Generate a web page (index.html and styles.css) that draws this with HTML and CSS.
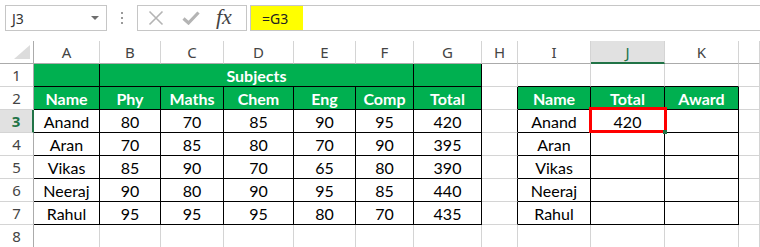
FILE: index.html
```html
<!DOCTYPE html>
<html>
<head>
<meta charset="utf-8">
<link rel="stylesheet" href="styles.css">
</head>
<body>
<div class="fbar">
  <div class="namebox"><span class="nb-text">J3</span><span class="nb-arrow"></span></div>
  <div class="grip"><i></i><i></i><i></i></div>
  <div class="fxbox">
    <svg class="ico-x" width="16" height="16" viewBox="0 0 16 16"><path d="M1.5 1.5 L14.5 14.5 M14.5 1.5 L1.5 14.5" stroke="#b4b4b4" stroke-width="1.6" fill="none"/></svg>
    <svg class="ico-ok" width="18" height="14" viewBox="0 0 18 14"><path d="M1.5 7.5 L6.5 12 L16.5 1.5" stroke="#b4b4b4" stroke-width="3.2" fill="none"/></svg>
    <span class="fx">fx</span>
  </div>
  <div class="formula"><span class="fval">=G3</span></div>
</div>

<div class="sheet">
  <div class="corner"><svg width="16" height="14" viewBox="0 0 16 14"><path d="M16 0 L16 14 L0 14 Z" fill="#dcdcdc"/></svg></div>
  <div class="ch">A</div><div class="ch">B</div><div class="ch">C</div><div class="ch">D</div><div class="ch">E</div><div class="ch">F</div><div class="ch">G</div><div class="ch">H</div><div class="ch">I</div><div class="ch sel">J</div><div class="ch">K</div><div class="ch"></div>

  <div class="rh">1</div>
  <div class="c g k"></div><div class="c g k span5">Subjects</div><div class="c g k"></div><div class="c"></div><div class="c kb"></div><div class="c kb"></div><div class="c kb"></div><div class="c"></div>

  <div class="rh">2</div>
  <div class="c g k">Name</div><div class="c g k">Phy</div><div class="c g k">Maths</div><div class="c g k">Chem</div><div class="c g k">Eng</div><div class="c g k">Comp</div><div class="c g k">Total</div><div class="c kr"></div><div class="c g k">Name</div><div class="c g k">Total</div><div class="c g k">Award</div><div class="c"></div>

  <div class="rh rsel">3</div>
  <div class="c k">Anand</div><div class="c k">80</div><div class="c k">70</div><div class="c k">85</div><div class="c k">90</div><div class="c k">95</div><div class="c k">420</div><div class="c kr"></div><div class="c k">Anand</div><div class="c k active">420<span class="selbox"></span><span class="handle"></span></div><div class="c k"></div><div class="c"></div>

  <div class="rh">4</div>
  <div class="c k">Aran</div><div class="c k">70</div><div class="c k">85</div><div class="c k">80</div><div class="c k">70</div><div class="c k">90</div><div class="c k">395</div><div class="c kr"></div><div class="c k">Aran</div><div class="c k"></div><div class="c k"></div><div class="c"></div>

  <div class="rh">5</div>
  <div class="c k">Vikas</div><div class="c k">85</div><div class="c k">90</div><div class="c k">70</div><div class="c k">65</div><div class="c k">80</div><div class="c k">390</div><div class="c kr"></div><div class="c k">Vikas</div><div class="c k"></div><div class="c k"></div><div class="c"></div>

  <div class="rh">6</div>
  <div class="c k">Neeraj</div><div class="c k">90</div><div class="c k">80</div><div class="c k">90</div><div class="c k">95</div><div class="c k">85</div><div class="c k">440</div><div class="c kr"></div><div class="c k">Neeraj</div><div class="c k"></div><div class="c k"></div><div class="c"></div>

  <div class="rh">7</div>
  <div class="c k">Rahul</div><div class="c k">95</div><div class="c k">95</div><div class="c k">95</div><div class="c k">80</div><div class="c k">70</div><div class="c k">435</div><div class="c kr"></div><div class="c k">Rahul</div><div class="c k"></div><div class="c k"></div><div class="c"></div>

  <div class="rh">8</div>
  <div class="c"></div><div class="c"></div><div class="c"></div><div class="c"></div><div class="c"></div><div class="c"></div><div class="c"></div><div class="c"></div><div class="c"></div><div class="c"></div><div class="c"></div><div class="c"></div>
</div>
</body>
</html>
```

FILE: styles.css
```css
html, body {
  margin: 0;
  padding: 0;
  background: #ffffff;
}
body {
  width: 760px;
  height: 247px;
  overflow: hidden;
  font-family: "Lato", "Liberation Sans", sans-serif;
}

/* formula bar */
.fbar {
  height: 41px;
  box-sizing: border-box;
  padding: 5px 0 0 5px;
  display: flex;
  align-items: flex-start;
}
.namebox {
  width: 102px;
  height: 26px;
  box-sizing: border-box;
  border: 1px solid #c6c6c6;
  display: flex;
  align-items: center;
  justify-content: space-between;
  padding: 0 7px 0 6px;
  font-family: "Noto Sans", "Open Sans", sans-serif;
  font-size: 14px;
  color: #333;
}
.nb-arrow {
  width: 0;
  height: 0;
  border-left: 4px solid transparent;
  border-right: 4px solid transparent;
  border-top: 4px solid #6e6e6e;
}
.grip {
  width: 30px;
  height: 26px;
  display: flex;
  flex-direction: column;
  align-items: center;
  justify-content: center;
  gap: 3px;
}
.grip i {
  display: block;
  width: 2px;
  height: 2px;
  background: #9a9a9a;
}
.fxbox {
  width: 110px;
  height: 26px;
  box-sizing: border-box;
  border: 1px solid #c6c6c6;
  display: flex;
  align-items: center;
  padding-left: 10px;
}
.ico-x { margin-right: 18px; }
.ico-ok { margin-right: 16px; }
.fx {
  font-family: "Liberation Serif", "DejaVu Serif", serif;
  font-style: italic;
  font-size: 22px;
  color: #444;
  line-height: 1;
  margin-top: -2px;
}
.formula {
  flex: 1;
  margin-left: 3px;
  height: 26px;
  box-sizing: border-box;
  border: 1px solid #c6c6c6;
  border-right: none;
  display: flex;
}
.fval {
  background: #ffff00;
  width: 52px;
  box-sizing: border-box;
  padding-left: 11px;
  display: flex;
  align-items: center;
  font-family: "Noto Sans", "Open Sans", sans-serif;
  font-size: 14px;
  color: #222;
}

/* sheet grid */
.sheet {
  display: grid;
  grid-template-columns: 34px 66px 61px 63px 70px 62px 58px 68px 36px 73px 74px 74px 21px;
  grid-template-rows: 23px repeat(8, 23px);
}
.sheet > div {
  box-sizing: border-box;
  border-right: 1px solid #d4d4d4;
  border-bottom: 1px solid #d4d4d4;
}
.corner {
  border-right-color: #ababab !important;
  border-bottom-color: #ababab !important;
  display: flex;
  align-items: flex-end;
  justify-content: flex-end;
  padding: 0 3px 4px 0;
}
.corner svg { display: block; }
.ch {
  border-bottom-color: #ababab !important;
  display: flex;
  align-items: center;
  justify-content: center;
  font-family: "Noto Sans", "Open Sans", sans-serif;
  font-size: 15px;
  color: #444;
}
.ch.sel {
  background: #e1e1e1;
  color: #217346;
  border-bottom: 2px solid #217346 !important;
}
.rh {
  border-right-color: #ababab !important;
  display: flex;
  align-items: center;
  justify-content: center;
  font-family: "Noto Sans", "Open Sans", sans-serif;
  font-size: 15px;
  color: #444;
}
.rh.rsel {
  background: #e1e1e1;
  color: #217346;
  font-weight: 700;
  border-right: 2px solid #217346 !important;
}
.c {
  display: flex;
  align-items: center;
  justify-content: center;
  font-size: 16px;
  color: #000;
  padding-top: 1px;
}
.span5 { grid-column: span 5; }
.g {
  background: #00b050;
  color: #ffffff;
  font-weight: 700;
}
.sheet > .k {
  border-right-color: #000;
  border-bottom-color: #000;
}
.sheet > .kr { border-right-color: #000; }
.sheet > .kb { border-bottom-color: #000; }
.active { position: relative; }
.selbox {
  position: absolute;
  left: -2px;
  top: -3px;
  width: 78px;
  height: 26px;
  box-sizing: border-box;
  border: 3px solid #ff0000;
}
.handle {
  position: absolute;
  right: -3px;
  bottom: -2px;
  width: 4px;
  height: 4px;
  background: #217346;
}
```
